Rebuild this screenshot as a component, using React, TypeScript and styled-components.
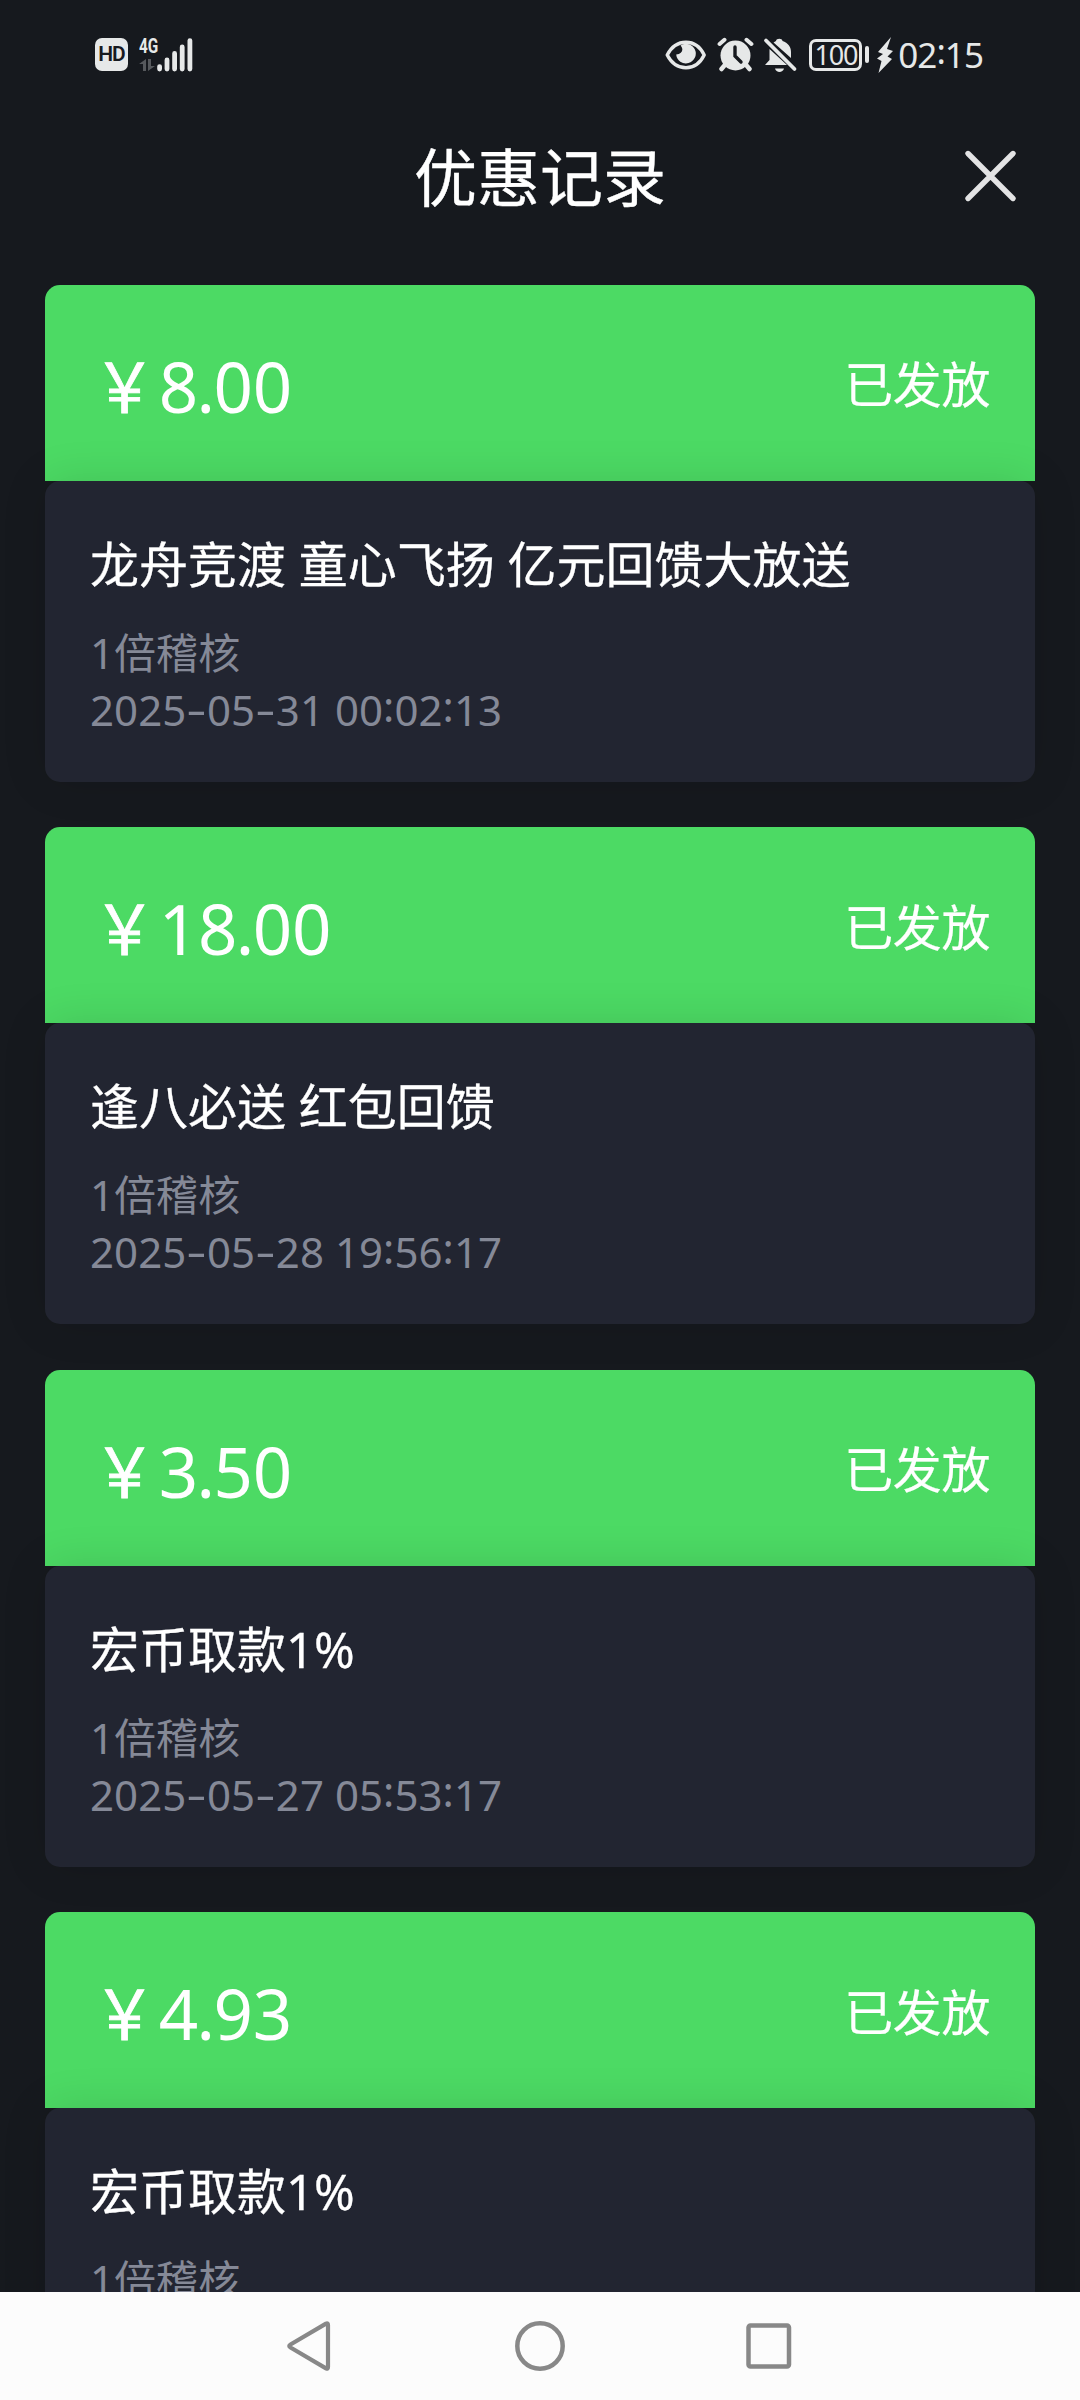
import React from "react";
import styled, { createGlobalStyle } from "styled-components";

const GlobalStyle = createGlobalStyle`
  html, body { margin: 0; padding: 0; background: #16191e; }
  * { box-sizing: border-box; }
`;

const Screen = styled.div`
  display: flex;
  flex-direction: column;
  width: 1080px;
  height: 2400px;
  overflow: hidden;
  background: #16191e;
  color: #fff;
  font-family: "Noto Sans", "Noto Sans CJK SC", sans-serif;
`;

const StatusBar = styled.div`
  display: flex;
  align-items: center;
  justify-content: space-between;
  flex: none;
  height: 109px;
  padding: 0 97px 0 95px;
  color: #e6e8e8;
`;

const StatusGroup = styled.div`
  display: flex;
  align-items: center;
`;

const HdBadge = styled.div`
  display: flex;
  align-items: center;
  justify-content: center;
  width: 33px;
  height: 33px;
  border-radius: 7px;
  background: #e6e8e8;
  color: #171a1f;
  font: 600 21px/33px Roboto, sans-serif;
  letter-spacing: -1px;
`;

const Network = styled.div`
  display: flex;
  flex-direction: column;
  width: 18px;
  height: 34px;
  margin-left: 11px;
`;

const NetworkType = styled.div`
  height: 21px;
  font: 700 21px/16px Roboto, sans-serif;
  white-space: nowrap;
  transform: scaleX(0.73);
  transform-origin: 0 0;
`;

const Icon = styled.svg<{ $gap?: number }>`
  display: block;
  flex: none;
  margin-left: ${(p) => p.$gap ?? 0}px;
`;

const Battery = styled.div`
  display: flex;
  align-items: center;
  justify-content: center;
  width: 53px;
  height: 32px;
  margin-left: 11px;
  border: 3px solid #e6e8e8;
  border-radius: 7px;
  font-size: 27px;
  line-height: 26px;
  letter-spacing: -1.2px;
`;

const BatteryTip = styled.div`
  width: 4px;
  height: 17px;
  margin-left: 3px;
  border-radius: 2px;
  background: #e6e8e8;
`;

const Clock = styled.div`
  margin-left: 5px;
  padding-top: 1px;
  font-size: 35px;
  line-height: 40px;
  letter-spacing: -0.95px;
`;

const Header = styled.header`
  display: grid;
  grid-template-columns: 1fr auto 1fr;
  align-items: center;
  flex: none;
  height: 137px;
  padding: 0 62px;
`;

const PageTitle = styled.h1`
  grid-column: 2;
  margin: 0 0 2px;
  font-size: 63px;
  font-weight: 400;
  line-height: 80px;
  -webkit-text-stroke: 0.4px currentColor;
`;

const CloseButton = styled.button`
  justify-self: end;
  padding: 0;
  margin-bottom: 3px;
  border: 0;
  background: none;
`;

const List = styled.main`
  display: flex;
  flex-direction: column;
  gap: 45.2px;
  flex: 1;
  min-height: 0;
  padding: 38.8px 45px 0;
  overflow: hidden;
`;

const Card = styled.article`
  flex: none;
`;

const CardTop = styled.div`
  display: flex;
  align-items: center;
  justify-content: space-between;
  height: 196.2px;
  padding: 0 45px;
  border-radius: 15px 15px 0 0;
  background: #4cda64;
`;

const Amount = styled.div`
  padding-top: 6px;
  font-size: 69px;
  line-height: 90px;
  letter-spacing: -0.2px;
`;

const Yen = styled.span`
  display: inline-block;
  transform: scaleX(0.9);
  -webkit-text-stroke: 0.9px currentColor;
`;

const Point = styled.span`
  margin: 0 -1.5px;
`;

const State = styled.div`
  padding-top: 3px;
  font-size: 49px;
  line-height: 60px;
  letter-spacing: -0.4px;
  -webkit-text-stroke: 0.2px currentColor;
`;

const CardBody = styled.div`
  height: 301px;
  padding: 52px 45px 0;
  border-radius: 15px;
  background: #222531;
  box-shadow: 0 0 45px rgba(0, 0, 0, 0.12);
`;

const CardTitle = styled.h2`
  margin: 0 0 29px;
  font-size: 49px;
  font-weight: 400;
  line-height: 62px;
  white-space: nowrap;
  -webkit-text-stroke: 0.3px currentColor;
`;

const Detail = styled.div`
  height: 57px;
  font-size: 42px;
  line-height: 57px;
  letter-spacing: 0.05px;
  color: #858997;
  white-space: nowrap;
`;

const Dash = styled.span`
  display: inline-block;
  width: 20.7px;
  text-align: center;
  transform: translateY(-1.5px) scaleX(1.5);
`;

const Colon = styled.span`
  position: relative;
  top: -4px;
`;

const NavBar = styled.nav`
  display: flex;
  align-items: center;
  justify-content: center;
  gap: 179px;
  flex: none;
  height: 108px;
  background: #fcfcfc;
`;

const Stamp = ({ value }: { value: string }) => (
  <>
    {value.split(/([-:])/).map((part, i) =>
      part === "-" ? <Dash key={i}>-</Dash> : part === ":" ? <Colon key={i}>:</Colon> : part
    )}
  </>
);

const Price = ({ value }: { value: string }) => {
  const [whole, cents] = value.split(".");
  return (
    <Amount>
      <Yen>{"\uFFE5"}</Yen>
      {whole}
      <Point>.</Point>
      {cents}
    </Amount>
  );
};

const records = [
  { amount: "8.00", title: "龙舟竞渡 童心飞扬 亿元回馈大放送", time: "2025-05-31 00:02:13" },
  { amount: "18.00", title: "逢八必送 红包回馈", time: "2025-05-28 19:56:17" },
  { amount: "3.50", title: "宏币取款1%", time: "2025-05-27 05:53:17" },
  { amount: "4.93", title: "宏币取款1%", time: "" },
];

const ink = "#e6e8e8";

export default function App() {
  return (
    <Screen>
      <GlobalStyle />
      <StatusBar>
        <StatusGroup>
          <HdBadge>HD</HdBadge>
          <Network>
            <NetworkType>4G</NetworkType>
            <Icon width="18" height="13" viewBox="0 0 18 13" fill="#56595d">
              <path d="M7 0V12H4V5H0ZM9 0H12V7H16L9 12Z" />
            </Icon>
          </Network>
          <Icon width="36" height="34" viewBox="0 0 36 34" stroke={ink} strokeWidth="4.8" strokeLinecap="round">
            <path d="M2.6 28.6V31M10 22V31M17.6 15.5V31M25.2 9V31M32.9 2.6V31" />
          </Icon>
        </StatusGroup>
        <StatusGroup>
          <Icon width="42" height="30" viewBox="0 0 42 30" fill="none">
            <path d="M2.2 15C11-2 31-2 39.2 15C31 32 11 32 2.2 15Z" stroke={ink} strokeWidth="3.4" strokeLinejoin="round" />
            <path d="M15.5 5.5C19 9 17.5 13.5 11.2 14.5A9.8 9.8 0 1 0 15.5 5.5Z" fill={ink} />
          </Icon>
          <Icon $gap={10} width="37" height="35" viewBox="0 0 37 35" fill="none" stroke={ink} strokeLinecap="round">
            <circle cx="18.5" cy="18.5" r="15" fill={ink} stroke="none" />
            <path d="M2.6 7L7.5 2.8M34.4 7L29.5 2.8" strokeWidth="4" />
            <path d="M7 29L4.5 32M30 29L32.5 32" strokeWidth="4.5" />
            <path d="M18 10V19L24 25" stroke="#171a1f" strokeWidth="3.4" />
          </Icon>
          <Icon $gap={9} width="35" height="36" viewBox="0 0 35 36" fill={ink}>
            <path d="M2 28L6.5 23V12L24 28ZM10.5 5.5L13 4C13.2 1 19.3 1 19.5 4C25 6 28 9.5 28 15V21ZM12 31.5H21C20 36 13 36 12 31.5Z" />
            <path d="M3 3.5L31.5 32" stroke={ink} strokeWidth="3.8" strokeLinecap="round" />
          </Icon>
          <Battery>100</Battery>
          <BatteryTip />
          <Icon $gap={8} width="16" height="36" viewBox="0 0 16 36" fill={ink}>
            <path d="M14 0L1 15L6 17L0 21.5L4.5 24L1.5 36L15 22L10.5 19.5L16 14L10 12Z" />
          </Icon>
          <Clock>02<Colon>:</Colon>15</Clock>
        </StatusGroup>
      </StatusBar>
      <Header>
        <PageTitle>优惠记录</PageTitle>
        <CloseButton aria-label="关闭">
          <Icon width="56" height="56" viewBox="0 0 56 56" stroke="#e3e3e4" strokeWidth="5.4" strokeLinecap="round">
            <path d="M6 5.5L51 50.5M51 5.5L6 50.5" />
          </Icon>
        </CloseButton>
      </Header>
      <List>
        {records.map((r, i) => (
          <Card key={i}>
            <CardTop>
              <Price value={r.amount} />
              <State>已发放</State>
            </CardTop>
            <CardBody>
              <CardTitle>{r.title}</CardTitle>
              <Detail>1倍稽核</Detail>
              {r.time && <Detail><Stamp value={r.time} /></Detail>}
            </CardBody>
          </Card>
        ))}
      </List>
      <NavBar>
        <Icon width="52" height="54" viewBox="0 0 52 54" fill="none" stroke="#888" strokeWidth="4.2" strokeLinejoin="round">
          <path d="M42 4.6Q44 3.6 44 6V48Q44 50.4 42 49.4L6.5 28.5Q4 27 6.5 25.5Z" />
        </Icon>
        <Icon width="50" height="50" viewBox="0 0 50 50" fill="none" stroke="#888" strokeWidth="4.5">
          <circle cx="25" cy="25" r="22.7" />
        </Icon>
        <Icon width="52" height="46" viewBox="0 0 52 46" fill="none" stroke="#888" strokeWidth="4.5">
          <rect x="4.5" y="2.5" width="40.5" height="41" rx="2" />
        </Icon>
      </NavBar>
    </Screen>
  );
}
